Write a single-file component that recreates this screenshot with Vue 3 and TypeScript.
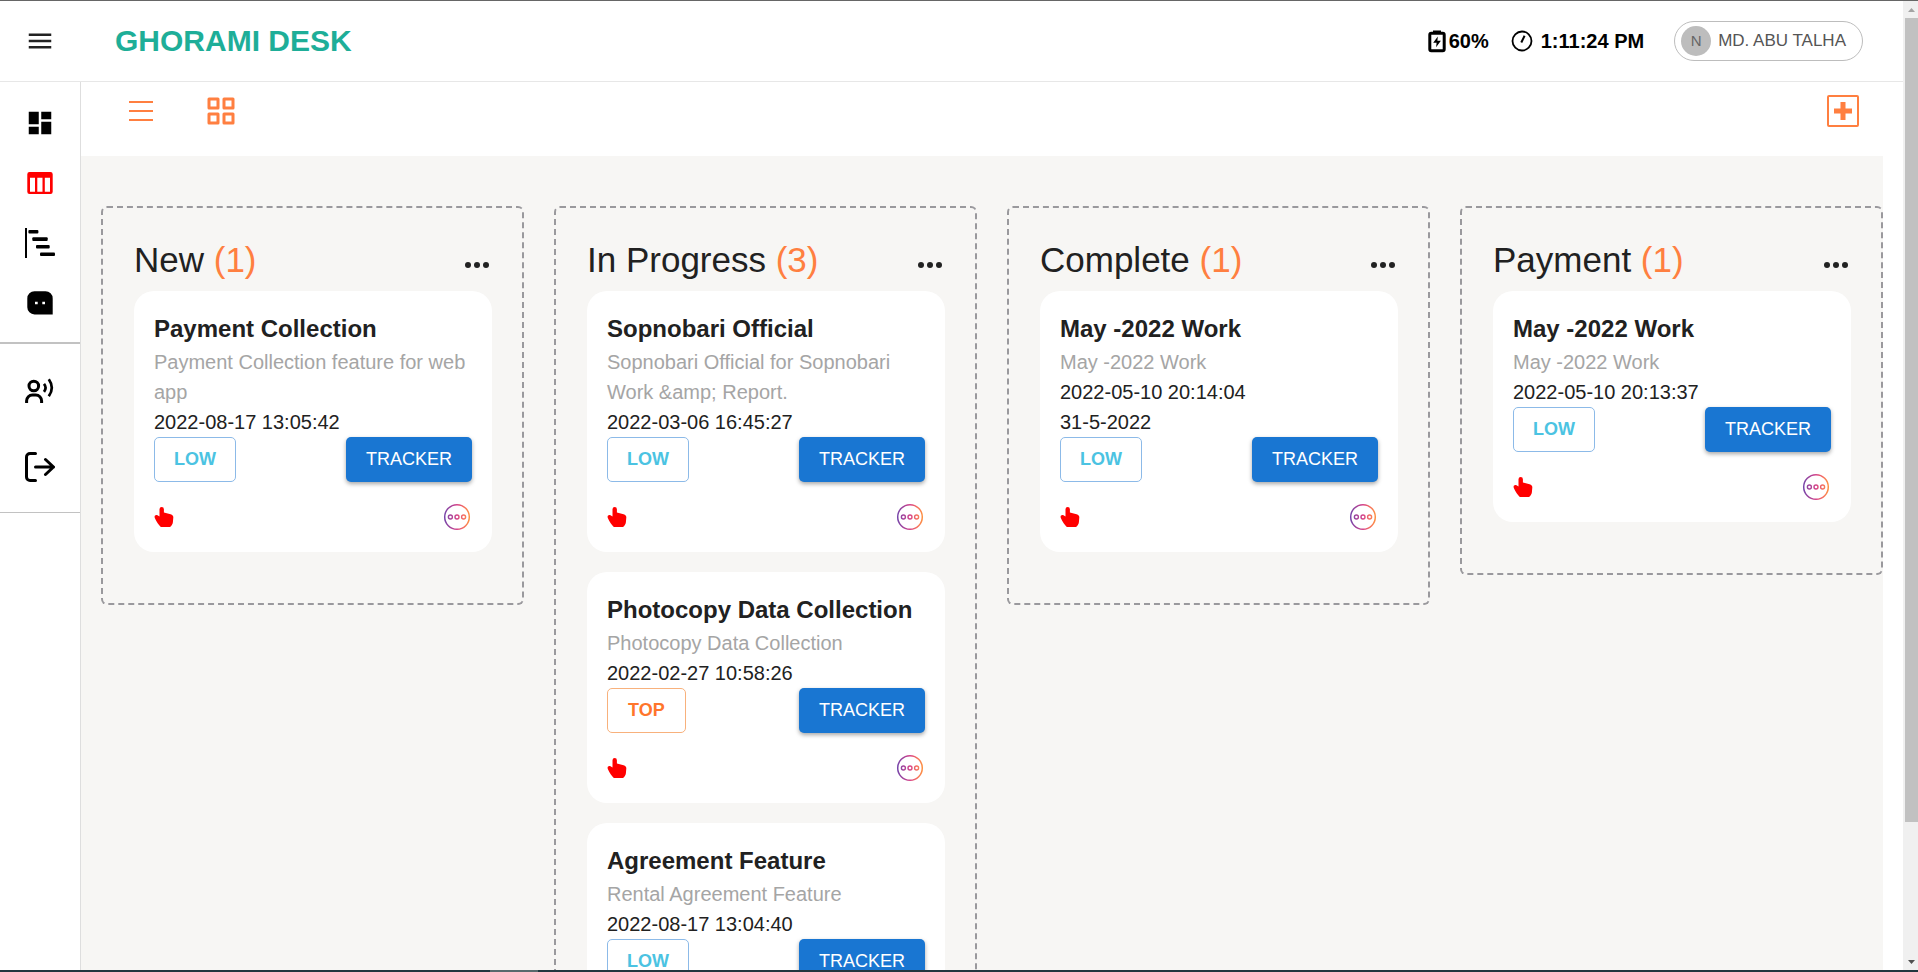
<script setup lang="ts">
interface Task {
  title: string
  description: string
  dates: string[]
  priority: 'LOW' | 'TOP'
}

interface Column {
  name: string
  tasks: Task[]
}

const columns: Column[] = [
  {
    name: 'New',
    tasks: [
      {
        title: 'Payment Collection',
        description: 'Payment Collection feature for web app',
        dates: ['2022-08-17 13:05:42'],
        priority: 'LOW',
      },
    ],
  },
  {
    name: 'In Progress',
    tasks: [
      {
        title: 'Sopnobari Official',
        description: 'Sopnobari Official for Sopnobari Work &amp; Report.',
        dates: ['2022-03-06 16:45:27'],
        priority: 'LOW',
      },
      {
        title: 'Photocopy Data Collection',
        description: 'Photocopy Data Collection',
        dates: ['2022-02-27 10:58:26'],
        priority: 'TOP',
      },
      {
        title: 'Agreement Feature',
        description: 'Rental Agreement Feature',
        dates: ['2022-08-17 13:04:40'],
        priority: 'LOW',
      },
    ],
  },
  {
    name: 'Complete',
    tasks: [
      {
        title: 'May -2022 Work',
        description: 'May -2022 Work',
        dates: ['2022-05-10 20:14:04', '31-5-2022'],
        priority: 'LOW',
      },
    ],
  },
  {
    name: 'Payment',
    tasks: [
      {
        title: 'May -2022 Work',
        description: 'May -2022 Work',
        dates: ['2022-05-10 20:13:37'],
        priority: 'LOW',
      },
    ],
  },
]
</script>

<template>
  <div class="window">
    <svg class="defs" width="0" height="0" aria-hidden="true">
      <defs>
        <linearGradient id="moreGradient" gradientUnits="userSpaceOnUse" x1="0" y1="14" x2="28" y2="14">
          <stop offset="0" stop-color="#6a45ad" />
          <stop offset="0.5" stop-color="#d5428a" />
          <stop offset="0.75" stop-color="#f5705f" />
          <stop offset="1" stop-color="#ff9a3c" />
        </linearGradient>
      </defs>
    </svg>

    <div class="viewport">
      <div class="app">
        <header class="topbar">
          <div class="menu-cell">
            <button class="icon-button" type="button" aria-label="Menu">
              <svg width="30" height="30" viewBox="0 0 24 24" fill="#222">
                <path d="M3 18h18v-2H3v2zm0-5h18v-2H3v2zm0-7v2h18V6H3z" />
              </svg>
            </button>
          </div>
          <h1 class="brand">GHORAMI DESK</h1>
          <div class="status">
            <span class="battery">
              <svg width="18" height="24" viewBox="0 0 18 24" fill="none">
                <rect x="1.8" y="4.3" width="14.4" height="17.4" rx="1.5" stroke="#000" stroke-width="3" />
                <path d="M5 1.5h8v3H5z" fill="#000" />
                <path d="M9.8 7.5 5.2 13.8h3.4l-.5 4.4 4.8-6.4H9.4z" fill="#000" />
              </svg>
              60%
            </span>
            <span class="clock">
              <svg width="22" height="22" viewBox="0 0 22 22" fill="none" stroke="#000" stroke-width="1.8">
                <circle cx="11" cy="11" r="9.5" />
                <path d="M10.3 12.5 13.6 5.8" stroke-width="2" />
              </svg>
              1:11:24 PM
            </span>
          </div>
          <button class="user" type="button">
            <span class="avatar">N</span>
            <span>MD. ABU TALHA</span>
          </button>
        </header>

        <div class="body">
          <nav class="sidebar" aria-label="Main">
            <div class="nav-group">
              <a href="#" aria-label="Dashboard">
                <svg width="30" height="30" viewBox="0 0 24 24">
                  <path d="M3 13h8V3H3v10zm0 8h8v-6H3v6zm10 0h8V11h-8v10zm0-18v6h8V3h-8z" />
                </svg>
              </a>
              <a href="#" aria-label="Board">
                <svg width="30" height="30" viewBox="0 0 30 30" fill="#f00">
                  <path fill-rule="evenodd" d="M4.5 4h21a2.2 2.2 0 0 1 2.2 2.2v17.6a2.2 2.2 0 0 1-2.2 2.2h-21a2.2 2.2 0 0 1-2.2-2.2V6.2A2.2 2.2 0 0 1 4.5 4zM5 9.7v14h5v-14zm7.3 0v14h5.2v-14zm7.5 0v14h5.2v-14z" />
                </svg>
              </a>
              <a href="#" aria-label="Timeline">
                <svg width="30" height="30" viewBox="0 0 30 30">
                  <path d="M0 0h2v30H0z" />
                  <rect x="3.4" y="2" width="10" height="3.6" rx="1" />
                  <rect x="7.3" y="9.3" width="15.4" height="3.6" rx="1" />
                  <rect x="11" y="17" width="13.7" height="3.6" rx="1" />
                  <rect x="15" y="24.4" width="15" height="3.6" rx="1" />
                </svg>
              </a>
              <a href="#" aria-label="Messages">
                <svg width="30" height="30" viewBox="0 0 30 30">
                  <path fill-rule="evenodd" d="M9.500 3.200h11a7.200 7.200 0 0 1 7.200 7.200V26.400H9.500a7.200 7.200 0 0 1-7.200-7.200v-8.800A7.200 7.200 0 0 1 9.500 3.200zM10 13.700v2.500h2.700v-2.500zm7.300 0v2.500H20v-2.500z" />
                </svg>
              </a>
            </div>
            <div class="nav-group secondary">
              <a href="#" aria-label="Voice">
                <svg width="30" height="30" viewBox="0 0 30 30" fill="none" stroke="#000" stroke-width="3">
                  <circle cx="8.8" cy="10" r="4.8" />
                  <path d="M1.6 27v-2.200a5.8 5.8 0 0 1 5.8-5.8h3.400a5.8 5.8 0 0 1 5.8 5.8V27" />
                  <path d="M19 7.800q3.200 4 0 8M23.800 3.300q6 8.500 0 17" stroke-width="2.700" />
                </svg>
              </a>
              <a href="#" aria-label="Log out">
                <svg width="30" height="30" viewBox="0 0 30 30" fill="none" stroke="#000" stroke-width="3" stroke-linecap="round" stroke-linejoin="round">
                  <path d="M10.5 1.5H5A3.5 3.5 0 0 0 1.5 5v20A3.500 3.500 0 0 0 5 28.500h5.500M10.500 15h18M20.500 7.500l8 7.500-8 7.500" />
                </svg>
              </a>
            </div>
          </nav>

          <main class="content">
            <div class="toolbar">
              <button class="icon-button" type="button" aria-label="List view">
                <svg width="24" height="24" viewBox="0 0 24 24" fill="#ff7f40">
                  <path d="M0 2h24v2H0zM0 11h24v2H0zM0 20h24v2H0z" />
                </svg>
              </button>
              <button class="icon-button grid-view" type="button" aria-label="Grid view">
                <svg width="28" height="28" viewBox="0 0 28 28" fill="none" stroke="#ff7f40" stroke-width="3">
                  <path d="M2 2h9v9H2zM17 2h9v9h-9zM2 17h9v9H2zM17 17h9v9h-9z" stroke-linejoin="round" />
                </svg>
              </button>
              <button class="icon-button add" type="button" aria-label="Add task">
                <svg width="32" height="32" viewBox="0 0 32 32" fill="none" stroke="#ff7f40">
                  <rect x="1" y="1" width="30" height="30" rx="1" stroke-width="2" />
                  <path d="M16 7v18M7 16h18" stroke-width="5" />
                </svg>
              </button>
            </div>

            <div class="board">
              <section v-for="column in columns" :key="column.name" class="column">
                <div class="column-head">
                  <h2>{{ column.name }} <span class="count">({{ column.tasks.length }})</span></h2>
                  <button class="icon-button" type="button" :aria-label="column.name + ' options'">
                    <svg width="30" height="30" viewBox="0 0 30 30" fill="#222">
                      <circle cx="6" cy="14" r="3" />
                      <circle cx="15" cy="14" r="3" />
                      <circle cx="24" cy="14" r="3" />
                    </svg>
                  </button>
                </div>
                <article v-for="task in column.tasks" :key="task.title" class="card">
                  <h3>{{ task.title }}</h3>
                  <p class="description">{{ task.description }}</p>
                  <p v-for="date in task.dates" :key="date">{{ date }}</p>
                  <div class="actions">
                    <button class="priority" :class="task.priority.toLowerCase()" type="button">
                      {{ task.priority }}
                    </button>
                    <button class="tracker" type="button">TRACKER</button>
                  </div>
                  <div class="card-foot">
                    <button class="icon-button" type="button" aria-label="Pick task">
                      <svg width="20" height="20" viewBox="0 0 20 20" fill="#f00">
                        <path d="M5.500 2.300a2.200 2.200 0 0 1 4.400 0V5.400l6.700 1.800c2 .6 2.900 1.700 2.700 3.400l-.4 4.600c-.2 2-1.600 3.800-2.900 4.800H6.800C4.800 18 2.500 14.500.8 10.900c-.8-2 .7-3.500 2.700-2.700l2 1.300z" />
                      </svg>
                    </button>
                    <button class="icon-button" type="button" aria-label="More">
                      <svg width="30" height="28" viewBox="-1 0 30 28" fill="none" stroke="url(#moreGradient)">
                        <circle cx="14" cy="14" r="12.3" stroke-width="1.5" />
                        <circle cx="7.4" cy="14" r="2" stroke-width="1.4" />
                        <circle cx="14" cy="14" r="2" stroke-width="1.4" />
                        <circle cx="20.6" cy="14" r="2" stroke-width="1.4" />
                      </svg>
                    </button>
                  </div>
                </article>
              </section>
            </div>
          </main>
        </div>
      </div>

      <div class="scrollbar" aria-hidden="true">
        <svg width="15" height="17" viewBox="0 0 15 17"><path d="M5 11h7L8.500 7z" fill="#a3a3a3" /></svg>
        <div class="track"><div class="thumb"></div></div>
        <svg width="15" height="17" viewBox="0 0 15 17"><path d="M5 7h7l-3.500 4z" fill="#505050" /></svg>
      </div>
    </div>
    <div class="taskbar"><div class="taskbar-item"></div></div>
  </div>
</template>

<style>
body {
  margin: 0;
}
</style>

<style scoped>
.window {
  display: flex;
  flex-direction: column;
  box-sizing: border-box;
  height: 100vh;
  overflow: hidden;
  border-top: 1px solid #666;
  background: #fff;
  color: #212121;
  font-family: "Liberation Sans", Arial, sans-serif;
  font-size: 20px;
  line-height: 30px;
}

.defs {
  position: absolute;
}

svg {
  display: block;
  flex: none;
}

button {
  font-family: inherit;
  cursor: pointer;
}

h1,
h2,
h3,
p {
  margin: 0;
}

.viewport {
  display: flex;
  flex: 1;
  min-height: 0;
}

.app {
  display: flex;
  flex: 1;
  flex-direction: column;
  min-width: 0;
  overflow: hidden;
}

.icon-button {
  padding: 0;
  border: 0;
  background: none;
}

/* Header */
.topbar {
  display: flex;
  flex: none;
  align-items: center;
  height: 80px;
  padding-right: 40px;
  border-bottom: 1px solid #e7e7e7;
}

.menu-cell {
  display: flex;
  justify-content: center;
  width: 80px;
}

.brand {
  margin-left: 35px;
  color: #1eae98;
  font-size: 30px;
  line-height: 40px;
}

.status {
  display: flex;
  gap: 22px;
  margin-left: auto;
  color: #000;
  font-weight: bold;
}

.battery,
.clock {
  display: flex;
  align-items: center;
}

.battery {
  gap: 3px;
}

.clock {
  gap: 8px;
}

.user {
  display: flex;
  align-items: center;
  gap: 7px;
  box-sizing: border-box;
  height: 40px;
  margin-left: 30px;
  padding: 0 16px 0 6px;
  border: 1px solid #bdbdbd;
  border-radius: 20px;
  background: #fff;
  color: #555;
  font-size: 17px;
}

.avatar {
  width: 30px;
  border-radius: 50%;
  background: #bdbdbd;
  color: #666;
  font-size: 15px;
  line-height: 30px;
  text-align: center;
}

/* Side navigation */
.body {
  display: flex;
  flex: 1;
  min-height: 0;
}

.sidebar {
  flex: none;
  width: 80px;
  border-right: 1px solid #dedede;
}

.nav-group {
  padding: 11px 0 9px;
  border-bottom: 2px solid #c2c2c2;
}

.nav-group a {
  display: flex;
  align-items: center;
  justify-content: center;
  height: 60px;
}

.nav-group.secondary {
  padding: 9px 0 7px;
  border-bottom-width: 1px;
}

.nav-group.secondary a {
  height: 76px;
}

/* Board */
.content {
  flex: 1;
  min-width: 0;
  margin-right: 20px;
}

.toolbar {
  display: flex;
  align-items: center;
  box-sizing: border-box;
  height: 74px;
  padding: 0 24px 16px 48px;
}

.grid-view {
  margin-left: 54px;
}

.add {
  margin-left: auto;
}

.board {
  display: grid;
  grid-template-columns: repeat(4, minmax(0, 1fr));
  align-items: start;
  gap: 30px;
  min-height: 100%;
  padding: 50px 0 50px 20px;
  background: #f7f6f4;
}

.column {
  padding: 31px 30px 31px 31px;
  border: 2px dashed #9a999d;
  border-radius: 6px;
}

.column-head {
  display: flex;
  align-items: flex-end;
  justify-content: space-between;
  margin-bottom: 10px;
}

.column-head h2 {
  font-size: 35px;
  font-weight: normal;
  line-height: 42px;
}

.count {
  color: #ff7f40;
}

.card {
  margin-bottom: 20px;
  padding: 20px;
  border-radius: 20px;
  background: #fff;
}

.card h3 {
  font-size: 24px;
  line-height: 36px;
}

.description {
  color: #a5a5a5;
}

.actions,
.card-foot {
  display: flex;
  align-items: center;
  justify-content: space-between;
}

.card-foot {
  height: 30px;
  margin-top: 20px;
}

.priority,
.tracker {
  box-sizing: border-box;
  height: 45px;
  border-radius: 5px;
  font-size: 18px;
}

.priority {
  padding: 0 19px;
  border: 1px solid;
  background: #fff;
  font-weight: bold;
}

.priority.low {
  border-color: #8cbae8;
  color: #4bc3e2;
}

.priority.top {
  padding: 0 20px;
  border-color: #f8b17c;
  color: #ff752b;
}

.tracker {
  padding: 0 20px;
  border: 0;
  background: #1976d2;
  box-shadow: 0 2px 4px rgba(0, 0, 0, 0.35);
  color: #fff;
}

/* Window edges */
.scrollbar {
  display: flex;
  flex: none;
  flex-direction: column;
  width: 15px;
  background: #f0f0f0;
}

.track {
  flex: 1;
}

.thumb {
  height: 86%;
  margin-left: 2px;
  background: #c1c1c1;
}

.taskbar {
  flex: none;
  height: 2px;
  padding-left: 490px;
  background: #21373f;
}

.taskbar-item {
  width: 48px;
  height: 2px;
  background: #58696c;
}
</style>
